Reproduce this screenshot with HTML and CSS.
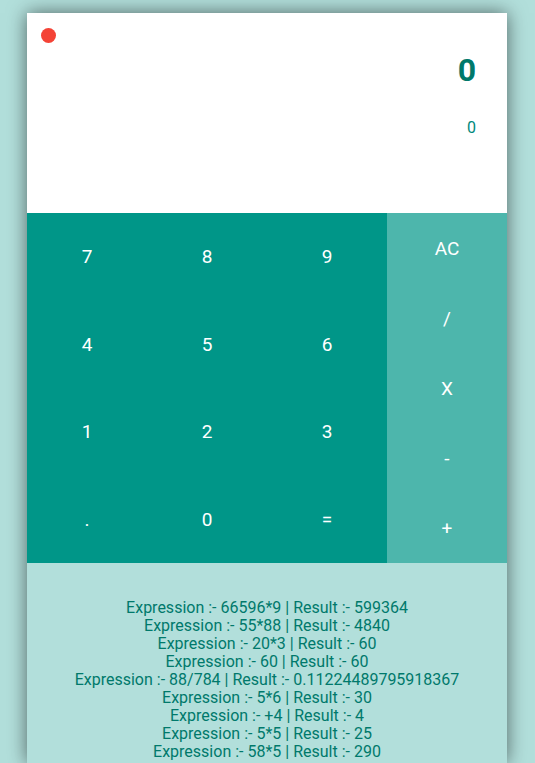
FILE: index.html
```html
<!DOCTYPE html>
<html>
<head>
<meta charset="utf-8">
<link rel="stylesheet" href="styles.css">
</head>
<body>
<div class="calc">
  <div class="display">
    <span class="dot"></span>
    <div class="result">0</div>
    <div class="expr">0</div>
  </div>
  <div class="keypad">
    <div class="digits">
      <button class="key">7</button>
      <button class="key">8</button>
      <button class="key">9</button>
      <button class="key">4</button>
      <button class="key">5</button>
      <button class="key">6</button>
      <button class="key">1</button>
      <button class="key">2</button>
      <button class="key">3</button>
      <button class="key">.</button>
      <button class="key">0</button>
      <button class="key">=</button>
    </div>
    <div class="ops">
      <button class="key op">AC</button>
      <button class="key op">/</button>
      <button class="key op">X</button>
      <button class="key op">-</button>
      <button class="key op">+</button>
    </div>
  </div>
  <div class="history">
    <p>Expression :- 66596*9 | Result :- 599364</p>
    <p>Expression :- 55*88 | Result :- 4840</p>
    <p>Expression :- 20*3 | Result :- 60</p>
    <p>Expression :- 60 | Result :- 60</p>
    <p>Expression :- 88/784 | Result :- 0.11224489795918367</p>
    <p>Expression :- 5*6 | Result :- 30</p>
    <p>Expression :- +4 | Result :- 4</p>
    <p>Expression :- 5*5 | Result :- 25</p>
    <p>Expression :- 58*5 | Result :- 290</p>
  </div>
</div>
</body>
</html>
```
FILE: styles.css
```css
html, body {
  margin: 0;
  padding: 0;
  background: #b2dfdb;
  font-family: Roboto, "Liberation Sans", sans-serif;
}
body {
  overflow: hidden;
  height: 763px;
}
.calc {
  width: 480px;
  margin: 13px 0 0 27px;
  background: #fff;
  box-shadow: 0 0 18px rgba(0, 0, 0, 0.55);
}
.display {
  position: relative;
  height: 200px;
  box-sizing: border-box;
  padding: 37px 31px 0 0;
  text-align: right;
  color: #00897b;
}
.dot {
  position: absolute;
  left: 14px;
  top: 15px;
  width: 15px;
  height: 15px;
  border-radius: 50%;
  background: #f44336;
}
.result {
  font-size: 32px;
  font-weight: 700;
  line-height: 40px;
  color: #00796b;
}
.expr {
  margin-top: 28px;
  font-size: 16px;
  line-height: 20px;
}
.keypad {
  display: flex;
  height: 350px;
}
.digits {
  width: 360px;
  display: grid;
  grid-template-columns: repeat(3, 1fr);
  grid-template-rows: repeat(4, 1fr);
  background: #009688;
}
.ops {
  width: 120px;
  display: grid;
  grid-template-rows: repeat(5, 1fr);
  background: #4db6ac;
}
.key {
  border: 0;
  margin: 0;
  padding: 0;
  background: transparent;
  color: #fff;
  font-family: Roboto, "Liberation Sans", sans-serif;
  font-size: 19px;
  display: flex;
  align-items: center;
  justify-content: center;
}
.history {
  height: 200px;
  box-sizing: border-box;
  padding-top: 36px;
  background: #b2dfdb;
  color: #00796b;
  text-align: center;
  font-size: 16px;
  line-height: 18px;
}
.history p {
  margin: 0;
}
```
